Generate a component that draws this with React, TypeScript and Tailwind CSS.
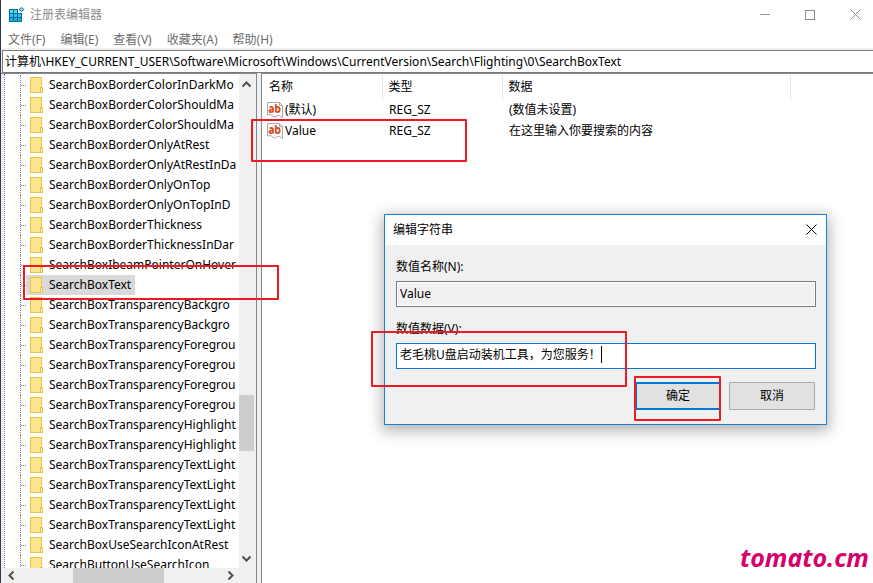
import { ReactNode } from "react";

// names as they show in the narrow tree pane
const treeItems = [
    "SearchBoxBorderColorInDarkMo",
    "SearchBoxBorderColorShouldMa",
    "SearchBoxBorderColorShouldMa",
    "SearchBoxBorderOnlyAtRest",
    "SearchBoxBorderOnlyAtRestInDa",
    "SearchBoxBorderOnlyOnTop",
    "SearchBoxBorderOnlyOnTopInD",
    "SearchBoxBorderThickness",
    "SearchBoxBorderThicknessInDar",
    "SearchBoxIbeamPointerOnHover",
    "SearchBoxText",
    "SearchBoxTransparencyBackgro",
    "SearchBoxTransparencyBackgro",
    "SearchBoxTransparencyForegrou",
    "SearchBoxTransparencyForegrou",
    "SearchBoxTransparencyForegrou",
    "SearchBoxTransparencyForegrou",
    "SearchBoxTransparencyHighlight",
    "SearchBoxTransparencyHighlight",
    "SearchBoxTransparencyTextLight",
    "SearchBoxTransparencyTextLight",
    "SearchBoxTransparencyTextLight",
    "SearchBoxTransparencyTextLight",
    "SearchBoxUseSearchIconAtRest",
    "SearchButtonUseSearchIcon",
];

const menus = ["文件(F)", "编辑(E)", "查看(V)", "收藏夹(A)", "帮助(H)"];

const values = [
    { name: "(默认)", type: "REG_SZ", data: "(数值未设置)" },
    { name: "Value", type: "REG_SZ", data: "在这里输入你要搜索的内容" },
];

function RegeditIcon() {
    return (
        <svg width="16" height="16" viewBox="0 0 16 16" shapeRendering="crispEdges" aria-hidden="true">
            <path d="M0 2h9v4h4v9H0z" fill="#0b6f9c" />
            <path d="M1 3h3v3H1zM5 3h3v3H5z" fill="#5fd4f7" />
            <path d="M1 7h3v3H1zM5 7h3v3H5zM9 7h3v3H9z" fill="#2fc0ee" />
            <path d="M1 11h3v3H1zM5 11h3v3H5zM9 11h3v3H9z" fill="#1fabdf" />
            <path d="M12.500 0L15.500 2.500 12.500 5 9.500 2.500z" fill="#1583b5" shapeRendering="auto" />
            <path d="M12 1h1v1h1v1h-1v1h-1V3h-1V2h1z" fill="#7fdcf8" />
        </svg>
    );
}

function FolderIcon() {
    return (
        <svg width="14" height="16" viewBox="0 0 14 16" shapeRendering="crispEdges" className="shrink-0" aria-hidden="true">
            <path d="M0 0h12v10h1v6H0z" fill="#e8c34a" />
            <path d="M1 1h10v14H1z" fill="#ffe48f" />
            <path d="M11 11h1v4h-1z" fill="#fff0b8" />
            <path d="M10 10h1v5h-1z" fill="#e8c34a" />
        </svg>
    );
}

function StringIcon() {
    return (
        <svg width="16" height="16" viewBox="0 0 16 16" className="shrink-0" aria-hidden="true">
            <path d="M.5.5h12l3 3v12l-3-2h-2l-2 1.500-3-1-2-1.500-3 .5z" fill="#fff" stroke="#a8a8a8" />
            <path d="M12.500.5v3h3" fill="none" stroke="#a8a8a8" />
            <g fill="none" stroke="#d9512c" strokeWidth="1.800">
                <path d="M2.500 5.400q3.500-1.200 3.500 1.200v3.900M6 7.600q-3.600-.3-3.600 1.400 0 1.300 1.500 1.200 1.600-.1 2.100-1.500" />
                <path d="M8.800 2v8.500M8.800 6.500q.6-1.600 2-1.500 1.900.1 1.900 2.500t-2 2.500q-1.500 0-1.900-1.300" />
            </g>
        </svg>
    );
}

function Chevron({ d }: { d: string }) {
    return (
        <svg width="9" height="9" viewBox="0 0 9 9" fill="none" stroke="#505050" strokeWidth="2" aria-hidden="true">
            <path d={d} />
        </svg>
    );
}

function CloseIcon() {
    return (
        <svg width="11" height="11" viewBox="0 0 11 11" fill="none" stroke="currentColor" aria-hidden="true">
            <path d="M.5.5l10 10M10.500.5l-10 10" />
        </svg>
    );
}

function TitleBar() {
    return (
        <header className="flex h-[29px] items-center pl-2 text-[#8c8c8c]">
            <RegeditIcon />
            <h1 className="ml-[5px] flex-1">注册表编辑器</h1>
            <button aria-label="最小化" className="flex h-full w-[45px] items-center justify-center">
                <span className="w-[10px] border-t border-[#999]" />
            </button>
            <button aria-label="最大化" className="flex h-full w-[45px] items-center justify-center">
                <span className="size-[10px] border border-[#8c8c8c]" />
            </button>
            <button aria-label="关闭" className="flex h-full w-[41px] items-center justify-center pl-[6px]">
                <CloseIcon />
            </button>
        </header>
    );
}

function Tree() {
    return (
        <section className="flex w-[255px] shrink-0 flex-col border-t border-[#828790] bg-[#f0f0f0]">
            <div className="flex min-h-0 flex-1">
                <ul className="ml-[3px] w-[235px] overflow-hidden border-l border-dotted border-[#808080] bg-white pt-px">
                    {treeItems.map((item, i) => (
                        <li key={i} className="ml-[15px] flex h-5 items-center border-l border-dotted border-[#808080]">
                            <span className="w-[5px] shrink-0 border-t border-dotted border-[#808080]" />
                            <a
                                href="#"
                                className={`flex h-5 items-center gap-px pl-1 whitespace-nowrap ${item === "SearchBoxText" ? "bg-[#d9d9d9]" : ""}`}
                            >
                                <FolderIcon />
                                <span className="px-1">{item}</span>
                            </a>
                        </li>
                    ))}
                </ul>
                {/* vertical scrollbar */}
                <div className="flex w-[15px] flex-col items-center">
                    <button aria-label="向上滚动" className="flex h-5 w-full items-center justify-center">
                        <Chevron d="M.5 6.500l4-4 4 4" />
                    </button>
                    <div className="flex w-full flex-1 flex-col">
                        <div className="flex-[301]" />
                        <div className="h-14 bg-[#cdcdcd]" />
                        <div className="flex-[97]" />
                    </div>
                    <button aria-label="向下滚动" className="flex h-5 w-full items-center justify-center">
                        <Chevron d="M.5 2.500l4 4 4-4" />
                    </button>
                </div>
            </div>
            {/* horizontal scrollbar */}
            <div className="ml-px flex h-[15px] w-[237px] items-center">
                <button aria-label="向左滚动" className="flex h-full w-[18px] items-center justify-center">
                    <Chevron d="M6.500.5l-4 4 4 4" />
                </button>
                <div className="flex h-full flex-1">
                    <div className="flex-[53]" />
                    <div className="w-[91px] bg-[#cdcdcd]" />
                    <div className="flex-[57]" />
                </div>
                <button aria-label="向右滚动" className="flex h-full w-[18px] items-center justify-center">
                    <Chevron d="M2.500.5l4 4-4 4" />
                </button>
            </div>
        </section>
    );
}

function ValueList() {
    return (
        <section className="min-w-0 flex-1 border-t border-l border-[#828790] bg-white pt-px">
            <table className="w-full table-fixed text-left">
                <thead>
                    <tr className="h-6">
                        <th className="w-[120px] border-r border-[#e5e5e5] pl-[7px] font-normal">名称</th>
                        <th className="w-[120px] border-r border-[#e5e5e5] pl-[6px] font-normal">类型</th>
                        <th className="w-[288px] border-r border-[#e5e5e5] pl-[6px] font-normal">数据</th>
                        <th />
                    </tr>
                </thead>
                <tbody>
                    {values.map((v) => (
                        <tr key={v.name} className="h-[21px]">
                            <td className="pl-[5px]">
                                <span className="flex items-center gap-[2px]">
                                    <StringIcon />
                                    {v.name}
                                </span>
                            </td>
                            <td className="pl-[7px]">{v.type}</td>
                            <td className="pl-[7px]">{v.data}</td>
                            <td />
                        </tr>
                    ))}
                </tbody>
            </table>
        </section>
    );
}

function EditDialog() {
    return (
        <div
            role="dialog"
            aria-label="编辑字符串"
            className="absolute top-[214px] left-[383px] w-[443px] border border-[#1a80d4] bg-[#f0f0f0] shadow-[0_4px_14px_2px_rgba(0,0,0,0.3)]"
        >
            <div className="flex h-[30px] items-center justify-between bg-white pr-[9px] pb-px pl-2">
                <h2>编辑字符串</h2>
                <button aria-label="关闭对话框">
                    <CloseIcon />
                </button>
            </div>
            <form className="px-[10px] pt-3 pb-[14px] pl-[11px]">
                <label htmlFor="value-name" className="block h-6 leading-5">数值名称(N):</label>
                <input
                    id="value-name"
                    readOnly
                    value="Value"
                    className="block h-[26px] w-full border border-[#7a7a7a] bg-[#f0f0f0] px-[3px] pb-[2px] inset-ring inset-ring-white outline-none"
                />
                <label htmlFor="value-data" className="mt-3 block h-6 leading-5">数值数据(V):</label>
                <div className="flex h-[26px] items-start border border-[#0078d7] bg-white px-[3px] pt-[2px]">
                    <input
                        id="value-data"
                        defaultValue="老毛桃U盘启动装机工具，为您服务！"
                        className="field-sizing-content h-[18px] outline-none"
                    />
                    <span className="h-[17px] w-px bg-black" />
                </div>
                <div className="mt-[13px] flex justify-end gap-2 pr-[1px]">
                    <button type="submit" className="h-7 w-[86px] border-2 border-[#0078d7] bg-[#e1e1e1]">确定</button>
                    <button type="button" className="h-7 w-[86px] border border-[#adadad] bg-[#e1e1e1]">取消</button>
                </div>
            </form>
        </div>
    );
}

// red frame drawn over the window to point something out
function Highlight({ className }: { className: string }): ReactNode {
    return <div className={`pointer-events-none absolute rounded-[1px] border-2 border-[#ed1c24] ${className}`} />;
}

export default function App() {
    return (
        <div className="relative flex h-screen flex-col overflow-hidden border-l border-[#2b3a55] bg-white font-['Noto_Sans','Noto_Sans_CJK_SC',sans-serif] text-[12px] leading-[18px] text-black">
            <TitleBar />
            <nav className="flex h-[19px] items-center gap-[15px] pt-[2px] pl-[7px] text-[#6d6d6d]">
                {menus.map((menu) => (
                    <button key={menu}>{menu}</button>
                ))}
            </nav>
            <div className="border-t-2 border-l border-[#f0f0f0]">
                <input
                    aria-label="地址"
                    defaultValue="计算机\HKEY_CURRENT_USER\Software\Microsoft\Windows\CurrentVersion\Search\Flighting\0\SearchBoxText"
                    className="block h-[23px] w-full border-y border-l border-[#7a7a7a] bg-white px-[2px] pb-px outline-none"
                />
            </div>
            <main className="flex min-h-0 flex-1 bg-[#f0f0f0]">
                <Tree />
                <div className="w-[5px] shrink-0 cursor-col-resize border-l border-[#828790]" />
                <ValueList />
            </main>
            <EditDialog />
            <Highlight className="top-[119px] left-[250px] h-[43px] w-[216px]" />
            <Highlight className="top-[265px] left-[22px] h-[35px] w-[256px]" />
            <Highlight className="top-[331px] left-[370px] h-[56px] w-[256px]" />
            <Highlight className="top-[376px] left-[633px] h-[45px] w-[87px]" />
            <p className="absolute right-1 bottom-[10px] text-[25px] leading-8 font-bold text-[#d6006c] italic">
                tomato.cm
            </p>
        </div>
    );
}
